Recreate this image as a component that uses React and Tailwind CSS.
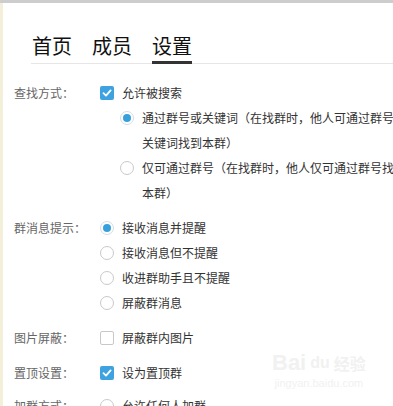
import React from 'react'

const font = { fontFamily: '"Noto Sans CJK SC", "Noto Sans", sans-serif' }

function Checkbox({ checked }) {
    if (checked) {
        return (
            <span className="w-[14px] h-[14px] shrink-0 rounded-[2px] bg-[#3fa2e0] flex items-center justify-center">
                <svg width="10" height="10" viewBox="0 0 10 10" fill="none">
                    <path d="M1.5 5.2 L4 7.6 L8.6 2.4" stroke="#fff" strokeWidth="1.8" strokeLinecap="round" strokeLinejoin="round" />
                </svg>
            </span>
        )
    }
    return <span className="w-[14px] h-[14px] shrink-0 rounded-[2px] border border-[#c8c8c8] bg-white" />
}

function Radio({ checked }) {
    if (checked) {
        return (
            <span className="w-[14px] h-[14px] shrink-0 rounded-full border border-[#d4dde2] bg-white flex items-center justify-center">
                <span className="w-[8px] h-[8px] rounded-full bg-[#37a0da]" />
            </span>
        )
    }
    return <span className="w-[14px] h-[14px] shrink-0 rounded-full border border-[#c9c9c9] bg-white" />
}

function Option({ control, children }) {
    return (
        <div className="h-[25px] flex items-center gap-2 whitespace-nowrap">
            {control}
            <span>{children}</span>
        </div>
    )
}

function Section({ label, children, className = '' }) {
    return (
        <div className={`flex ${className}`}>
            <div className="w-[86px] shrink-0 h-[25px] leading-[25px] text-[#666]">{label}</div>
            <div className="flex-1 min-w-0 text-[#333]">{children}</div>
        </div>
    )
}

export default function App() {
    return (
        <div className="relative w-[393px] h-[406px] overflow-hidden bg-white text-[12px]" style={font}>
            <div className="h-[3px] bg-[#cdcdcd]" />
            <div className="flex h-[403px]">
                <div className="w-[3px] shrink-0 bg-[#f4efd8]" />
                <div className="flex-1 min-w-0">
                    {/* tabs */}
                    <div className="ml-[28px] mt-[33px] flex gap-5 pl-px border-b border-[#e6e6e6] text-[20px] leading-[20px] text-[#111]">
                        <div className="pb-[5px] border-b-[3px] border-transparent -mb-px">首页</div>
                        <div className="pb-[5px] border-b-[3px] border-transparent -mb-px">成员</div>
                        <div className="pb-[5px] border-b-[3px] border-[#333] -mb-px">设置</div>
                    </div>

                    <div className="pl-[11px] mt-[16px]">
                        <Section label="查找方式：">
                            <Option control={<Checkbox checked />}>允许被搜索</Option>
                            <div className="pl-[20px]">
                                <Option control={<Radio checked />}>通过群号或关键词（在找群时，他人可通过群号或</Option>
                                <div className="pl-[22px] h-[25px] leading-[25px] whitespace-nowrap">关键词找到本群）</div>
                                <Option control={<Radio />}>仅可通过群号（在找群时，他人仅可通过群号找到</Option>
                                <div className="pl-[22px] h-[25px] leading-[25px] whitespace-nowrap">本群）</div>
                            </div>
                        </Section>

                        <Section label="群消息提示：" className="mt-[10px]">
                            <Option control={<Radio checked />}>接收消息并提醒</Option>
                            <Option control={<Radio />}>接收消息但不提醒</Option>
                            <Option control={<Radio />}>收进群助手且不提醒</Option>
                            <Option control={<Radio />}>屏蔽群消息</Option>
                        </Section>

                        <Section label="图片屏蔽：" className="mt-[10px]">
                            <Option control={<Checkbox />}>屏蔽群内图片</Option>
                        </Section>

                        <Section label="置顶设置：" className="mt-[10px]">
                            <Option control={<Checkbox checked />}>设为置顶群</Option>
                        </Section>

                        <Section label="加群方式：" className="mt-[8px]">
                            <Option control={<Radio />}>允许任何人加群</Option>
                        </Section>
                    </div>
                </div>
            </div>

            {/* watermark */}
            <div className="absolute left-[272px] top-[352px] flex flex-col items-center text-[#f1f1f1] pointer-events-none" style={{ fontFamily: '"Liberation Sans", sans-serif' }}>
                <div className="flex items-end gap-1 text-[22px] leading-[22px] font-bold">
                    <span>Bai</span>
                    <span className="text-[16px]">du</span>
                    <span className="text-[16px]" style={font}>经验</span>
                </div>
                <div className="text-[11px] leading-[14px] mt-[2px]">jingyan.baidu.com</div>
            </div>
        </div>
    )
}
